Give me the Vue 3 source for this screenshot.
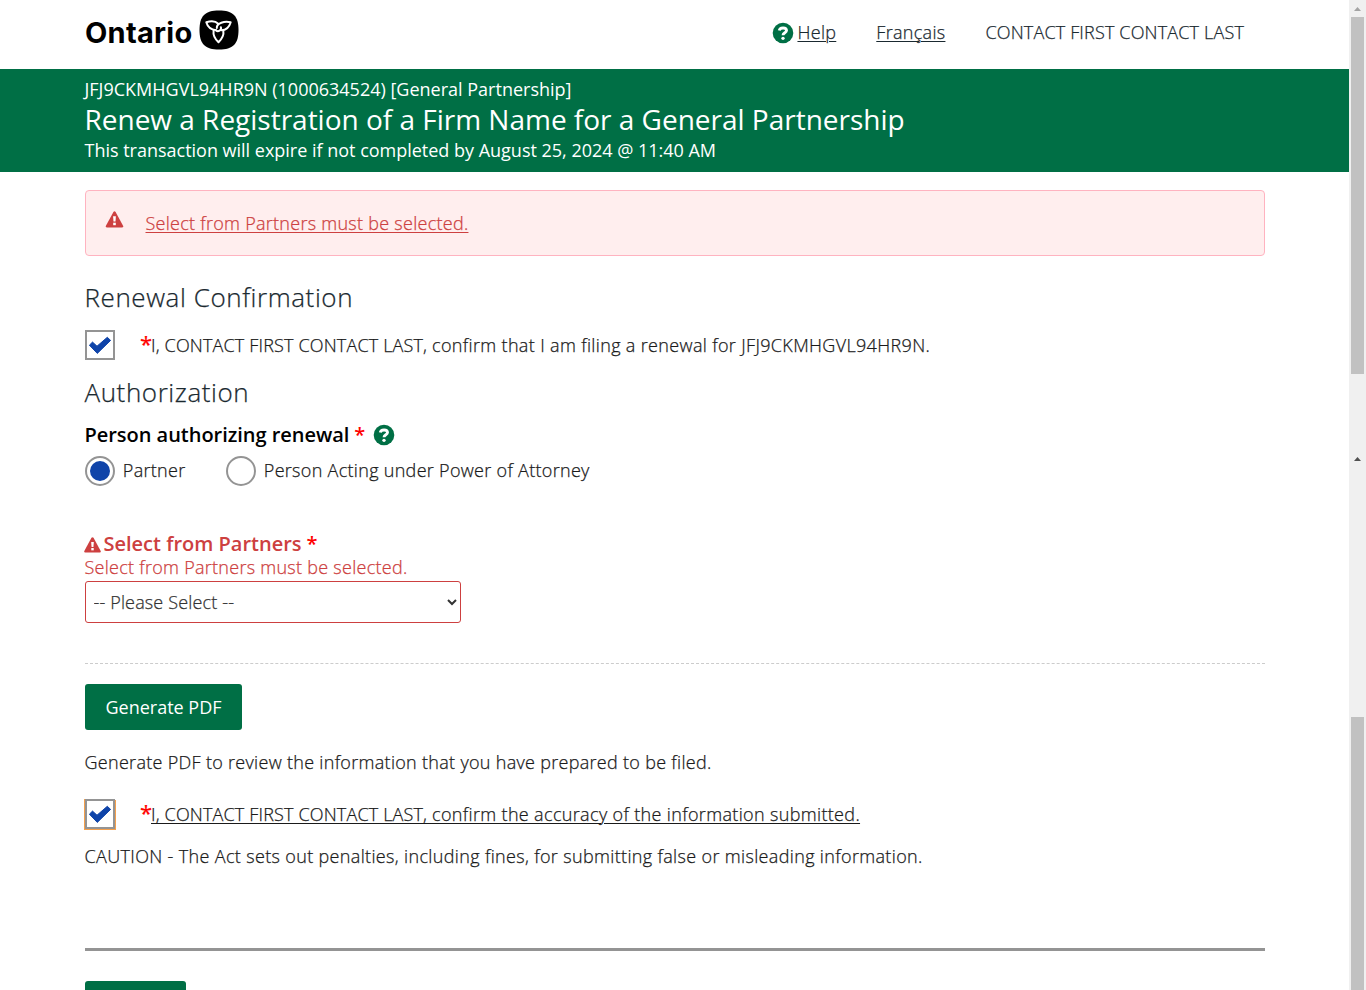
<script setup>
import { ref } from 'vue'

const renewalConfirmed = ref(true)
const accuracyConfirmed = ref(true)
const authorizer = ref('partner')
const partner = ref('')
const user = 'CONTACT FIRST CONTACT LAST'
const checkPath = 'M2.400 13.200L5.500 10.100L10 14.200L20.300 5.300L23.600 8.400L10.300 21.400Z'
</script>

<template>
  <div class="page">
    <div class="document">
      <header class="topbar">
        <a class="brand">
          <span class="wordmark">Ontario</span>
          <svg class="trillium" viewBox="0 0 40 40">
            <path d="M20 0.500C34 .5 39.500 6 39.500 20S34 39.500 20 39.500 .5 34 .5 20 6 .5 20 .5Z" fill="#000" />
            <g fill="none" stroke="#fff" stroke-width="2" stroke-linejoin="round" stroke-linecap="round">
              <path d="M17 20.300C12 19.800 8.500 16.500 7.300 12.300C11.500 11 16.500 11 19.200 13.800" />
              <path d="M17.800 18C17.500 13 25.500 10.800 31.700 12.300C30.300 17 27.500 20.300 22.500 20.300" />
              <path d="M14.600 20.500C14 24.500 16 29 19.500 32.200C22.800 29 25 24.500 24.300 20.800" />
              <path d="M17 20.300C19 22.300 22.800 20.500 21.900 17.200" />
            </g>
          </svg>
        </a>
        <nav class="nav">
          <a class="nav-help">
            <svg class="help-icon" viewBox="0 0 22 22">
              <circle cx="11" cy="11" r="10.300" fill="#006f45" />
              <path d="M7.300 8.500C7.800 5.300 14.300 5 14.500 8.400C14.500 10.700 11 10.700 11 13.200" fill="none" stroke="#fff" stroke-width="2.900" />
              <circle cx="11" cy="16.300" r="1.650" fill="#fff" />
            </svg>
            <span class="u t-help">Help</span>
          </a>
          <a class="u t-lang">Français</a>
          <span class="t-user">{{ user }}</span>
        </nav>
      </header>

      <section class="banner">
        <p class="banner-entity">JFJ9CKMHGVL94HR9N (1000634524) [General Partnership]</p>
        <h1>Renew a Registration of a Firm Name for a General Partnership</h1>
        <p class="banner-expiry">This transaction will expire if not completed by August 25, 2024 @ 11:40 AM</p>
      </section>

      <main class="content">
        <div class="alert">
          <svg class="warn" viewBox="0 0 18 17">
            <path d="M7.900 .9Q9 -.5 10.100 .9L17.700 15Q18.200 16.400 16.700 16.500H1.300Q-.2 16.400 .3 15Z" fill="#cd4040" />
            <path d="M7.600 5.300H10.400L10 10.500H8Z" fill="#fff" /><rect x="7.700" y="11.700" width="2.600" height="2.500" fill="#fff" />
          </svg>
          <a class="u t-error">Select from Partners must be selected.</a>
        </div>

        <h2 class="h-renewal">Renewal Confirmation</h2>
        <label class="check-row">
          <input v-model="renewalConfirmed" class="native" type="checkbox">
          <span class="box"><svg v-if="renewalConfirmed" viewBox="0 0 26 26"><path :d="checkPath" class="tick" /></svg></span>
          <span class="star">*</span><span class="t-confirm"><span class="t-user">I, {{ user }}, </span>confirm that I am filing a renewal for JFJ9CKMHGVL94HR9N.</span>
        </label>

        <h2 class="h-auth">Authorization</h2>
        <div class="field-label">
          <span class="t-person">Person authorizing renewal</span><span class="req">*</span>
          <svg class="help-icon" viewBox="0 0 22 22">
            <circle cx="11" cy="11" r="10.300" fill="#006f45" />
            <path d="M7.300 8.500C7.800 5.300 14.300 5 14.500 8.400C14.500 10.700 11 10.700 11 13.200" fill="none" stroke="#fff" stroke-width="2.900" />
            <circle cx="11" cy="16.300" r="1.650" fill="#fff" />
          </svg>
        </div>
        <div class="radios">
          <label class="radio r-partner"><input v-model="authorizer" class="native" type="radio" value="partner"><span class="ring"><i v-if="authorizer === 'partner'" /></span><span>Partner</span></label>
          <label class="radio"><input v-model="authorizer" class="native" type="radio" value="attorney"><span class="ring"><i v-if="authorizer === 'attorney'" /></span><span class="t-attorney">Person Acting under Power of Attorney</span></label>
        </div>

        <div class="select-label">
          <svg class="warn" viewBox="0 0 18 17">
            <path d="M7.900 .9Q9 -.5 10.100 .9L17.700 15Q18.200 16.400 16.700 16.500H1.300Q-.2 16.400 .3 15Z" fill="#cd4040" />
            <path d="M7.600 5.300H10.400L10 10.500H8Z" fill="#fff" /><rect x="7.700" y="11.700" width="2.600" height="2.500" fill="#fff" />
          </svg>
          <span class="t-select">Select from Partners</span><span class="req">*</span>
        </div>
        <p class="field-error t-error">Select from Partners must be selected.</p>
        <select v-model="partner" class="select"><option value="">-- Please Select --</option></select>

        <div class="dashes" />
        <button class="btn">Generate PDF</button>
        <p class="para p-pdf">Generate PDF to review the information that you have prepared to be filed.</p>
        <label class="check-row second">
          <input v-model="accuracyConfirmed" class="native" type="checkbox">
          <span class="box focus"><svg v-if="accuracyConfirmed" viewBox="0 0 26 26"><path :d="checkPath" class="tick" /></svg></span>
          <span class="star">*</span><span class="u t-confirm"><span class="t-user">I, {{ user }}, </span>confirm the accuracy of the information submitted.</span>
        </label>
        <p class="para p-caution">CAUTION - The Act sets out penalties, including fines, for submitting false or misleading information.</p>
        <div class="rule" />
        <div class="next-btn" />
      </main>
    </div>

    <aside class="track">
      <span class="arrow pale"></span>
      <span class="thumb first"></span>
      <span class="arrow"></span>
      <span class="thumb last"></span>
    </aside>
  </div>
</template>

<style>
body { margin: 0; overflow: hidden; background: #fff; }
</style>

<style scoped>
* { box-sizing: border-box; }
.page { display: flex; width: 1366px; height: 990px; overflow: hidden; font-family: "Open Sans", "Noto Sans", sans-serif; font-size: 18px; font-weight: 300; letter-spacing: .3px; -webkit-text-stroke-width: .25px; color: #1a1a1a; white-space: nowrap; }
p, h1, h2 { margin: 0; }
svg { display: block; flex: none; }
.document { width: 1349px; height: 990px; overflow: hidden; flex: none; }
.u { text-decoration: underline; text-decoration-thickness: 1px; text-underline-offset: 2px; }
.native { appearance: none; width: 0; height: 0; margin: 0; }

.topbar { display: flex; justify-content: space-between; height: 69px; padding: 0 105px 0 85px; }
.brand { display: flex; padding-top: 10px; }
.wordmark { width: 114px; font: 700 29px/46px "Inter", sans-serif; letter-spacing: .25px; -webkit-text-stroke-width: 0; color: #000; }
.trillium { width: 40px; height: 40px; }
.nav { display: flex; line-height: 24px; padding-top: 20px; color: #1a2930; }
.nav-help { display: flex; margin-right: 40px; }
.help-icon { width: 22px; height: 22px; }
.nav-help .help-icon { margin: 2px 3px 0 0; }
.t-lang { margin-right: 40px; }
.t-user { letter-spacing: .16px; }

.banner { height: 103px; padding: 8px 0 0 84.500px; background: #006f45; color: #fff; font-weight: 400; letter-spacing: 0; -webkit-text-stroke-width: 0; }
.banner p { line-height: 24px; }
.banner h1 { font-size: 28px; font-weight: 400; line-height: 37px; letter-spacing: -.01px; }
.banner .banner-expiry { letter-spacing: -.01px; }

.content { width: 1180px; margin: 18px 0 0 85px; }
.alert { display: flex; height: 66px; padding: 20px 0 0 19px; border: 1px solid #ffb3c0; border-radius: 4px; background: #ffeeee; line-height: 24px; }
.alert .warn { width: 19px; height: 17px; margin-right: 21.500px; }
.t-error { color: #cd4040; letter-spacing: .27px; }
h2 { font-size: 26px; font-weight: 300; line-height: 36px; letter-spacing: .58px; color: #1a2930; }
.h-renewal { margin: 23px 0 0 -.5px; }
.check-row { display: flex; height: 30px; margin-top: 15px; line-height: 30px; }
.t-confirm { letter-spacing: .345px; }
.box { width: 30px; height: 30px; margin-right: 25px; border: 2px solid #949494; background: #fff; flex: none; }
.box.focus { box-shadow: -1px 0 #f5a04c, -1px 1px #f5a04c, 1px 1px #f5a04c; }
.tick { fill: #0f44a9; stroke: #0f44a9; stroke-width: 1; stroke-linejoin: round; }
.star { width: 11px; color: #f00; font-size: 22px; font-weight: 400; line-height: 27px; letter-spacing: 0; }
.h-auth { margin: 14px 0 0 -.5px; }
.field-label { display: flex; height: 28px; margin: 11px 0 0 -.5px; line-height: 28px; font-size: 20px; font-weight: 600; letter-spacing: -.03px; -webkit-text-stroke-width: 0; color: #000; }
.req { margin-left: 5px; color: #f00; }
.field-label .help-icon { margin: 3px 0 0 7.500px; }
.radios { display: flex; height: 30px; margin-top: 7px; line-height: 29px; }
.radio { display: flex; }
.r-partner { width: 141px; }
.ring { display: grid; place-items: center; width: 30px; height: 30px; margin-right: 7.800px; border: 2px solid #949494; border-radius: 50%; }
.ring i { width: 20px; height: 20px; border-radius: 50%; background: #0f44a9; }
.select-label { display: flex; height: 24px; margin-top: 45px; line-height: 25px; font-size: 20px; font-weight: 600; letter-spacing: 0; -webkit-text-stroke-width: 0; color: #cd4040; }
.select-label .warn { width: 17px; height: 16px; margin: 6px 2.500px 0 -1px; }
.field-error { margin-left: -.5px; line-height: 24px; }
.select { display: block; width: 376px; height: 42px; margin-top: 2px; padding: 0 2px 0 3.500px; border: 1px solid #cd4040; border-radius: 3px; background: #fff; font: 300 18px "Open Sans", sans-serif; letter-spacing: .15px; color: #333; }
.dashes { height: 1px; margin-top: 40px; border-top: 1px dashed #ccc; }
.btn { display: block; width: 157px; height: 46px; margin-top: 20px; padding: 0; border: 0; border-radius: 3px; background: #006f45; font: 400 18px "Open Sans", sans-serif; letter-spacing: 0; -webkit-text-stroke-width: 0; color: #fff; }
.para { margin-left: -.5px; line-height: 24px; }
.p-pdf { margin-top: 20px; }
.second { margin-top: 25px; }
.p-caution { margin-top: 15px; letter-spacing: .345px; }
.rule { height: 3px; margin-top: 80px; background: #949494; }
.next-btn { width: 101px; height: 46px; margin-top: 30px; border-radius: 3px; background: #006f45; }

.track { display: flex; flex-direction: column; align-items: center; width: 17px; height: 990px; background: #f0f0f0; }
.arrow { width: 7px; height: 4px; margin-top: 7px; background: #505050; clip-path: polygon(50% 0, 100% 100%, 0 100%); }
.arrow.pale { background: #a3a3a3; }
.thumb { width: 13px; background: #c1c1c1; }
.first { height: 357px; margin-top: 6px; }
.thumb + .arrow { margin-top: 83px; }
.last { flex: 1; margin-top: 256px; }
</style>
